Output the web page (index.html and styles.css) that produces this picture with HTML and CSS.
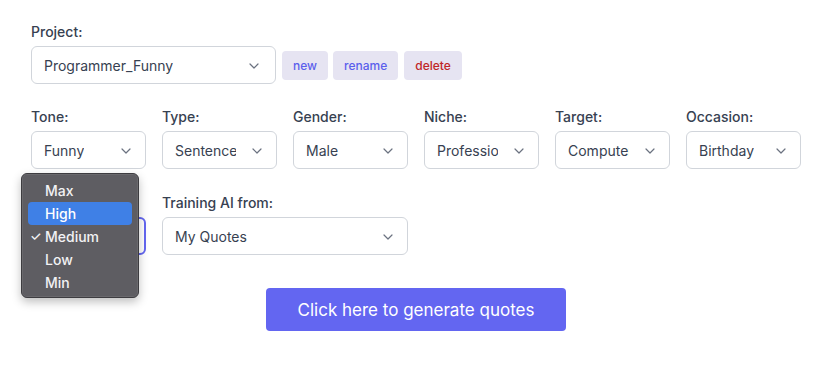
FILE: index.html
```html
<!DOCTYPE html>
<html>
<head>
<meta charset="utf-8">
<link rel="stylesheet" href="styles.css">
</head>
<body>
<div class="page">
  <div class="field">
    <label class="label">Project:</label>
    <div class="project-row">
      <div class="select project-select"><span class="val">Programmer_Funny</span><svg class="chev" viewBox="0 0 10 6"><path d="M1 1l4 4 4-4"/></svg></div>
      <button class="mini">new</button>
      <button class="mini">rename</button>
      <button class="mini danger">delete</button>
    </div>
  </div>

  <div class="grid">
    <div class="field"><label class="label">Tone:</label><div class="select"><span class="val">Funny</span><svg class="chev" viewBox="0 0 10 6"><path d="M1 1l4 4 4-4"/></svg></div></div>
    <div class="field"><label class="label">Type:</label><div class="select"><span class="val">Sentence</span><svg class="chev" viewBox="0 0 10 6"><path d="M1 1l4 4 4-4"/></svg></div></div>
    <div class="field"><label class="label">Gender:</label><div class="select"><span class="val">Male</span><svg class="chev" viewBox="0 0 10 6"><path d="M1 1l4 4 4-4"/></svg></div></div>
    <div class="field"><label class="label">Niche:</label><div class="select"><span class="val">Professional</span><svg class="chev" viewBox="0 0 10 6"><path d="M1 1l4 4 4-4"/></svg></div></div>
    <div class="field"><label class="label">Target:</label><div class="select"><span class="val">Computer</span><svg class="chev" viewBox="0 0 10 6"><path d="M1 1l4 4 4-4"/></svg></div></div>
    <div class="field"><label class="label">Occasion:</label><div class="select"><span class="val">Birthday</span><svg class="chev" viewBox="0 0 10 6"><path d="M1 1l4 4 4-4"/></svg></div></div>

    <div class="field menu-anchor"><label class="label hidden-label">Creativity:</label><div class="select focused"><span class="val">Medium</span><svg class="chev" viewBox="0 0 10 6"><path d="M1 1l4 4 4-4"/></svg></div>
      <ul class="menu">
        <li class="item">Max</li>
        <li class="item active">High</li>
        <li class="item checked"><span class="check">✓</span>Medium</li>
        <li class="item">Low</li>
        <li class="item">Min</li>
      </ul>
    </div>
    <div class="field span2"><label class="label">Training AI from:</label><div class="select"><span class="val">My Quotes</span><svg class="chev" viewBox="0 0 10 6"><path d="M1 1l4 4 4-4"/></svg></div></div>
  </div>

  <div class="actions">
    <button class="generate">Click here to generate quotes</button>
  </div>
</div>
</body>
</html>
```

FILE: styles.css
```css
* { box-sizing: border-box; }
html, body { margin: 0; padding: 0; background: #fff; }
body { font-family: Inter, "Noto Sans", sans-serif; color: #374151; }
.page { width: 826px; padding: 22px 25px 0 31px; }
.field { display: flex; flex-direction: column; }
.label { display: block; font-size: 14px; line-height: 20px; font-weight: 500; color: #374151; margin-bottom: 4px; }
.project-row { display: flex; align-items: center; gap: 5px; }
.select {
  position: relative; height: 38px; border: 1px solid #d1d5db; border-radius: 6px;
  background: #fff; display: flex; align-items: center; padding: 0 40px 0 12px;
  font-size: 14px; color: #374151; overflow: hidden;
}
.val { white-space: nowrap; overflow: hidden; display: block; }
.chev { position: absolute; right: 14px; top: 16px; width: 10px; height: 6px; fill: none; stroke: #6b7280; stroke-width: 1.2; stroke-linecap: round; stroke-linejoin: round; }
.project-select { width: 245px; margin-right: 1px; }
.project-select .chev { right: 16px; }
.mini {
  height: 29px; border: none; border-radius: 4px; background: #e6e4f2; color: #5b5fec;
  font-family: inherit; font-size: 12px; font-weight: 500; padding: 0 11px;
}
.mini.danger { color: #c02626; margin-left: 1px; }
.grid { display: grid; grid-template-columns: repeat(6, 115px); column-gap: 16px; row-gap: 24px; margin-top: 23px; }
.span2 { grid-column: span 2; }
.focused { border: 2px solid #6366f1; }
.menu-anchor { position: relative; }
.menu {
  position: absolute; left: -10px; top: -20px; width: 118px; margin: 0; padding: 5px 6px 3px;
  list-style: none; background: #5e5d62; border: 1px solid #3d3c40; border-radius: 6px;
  box-shadow: 0 0 0 0.5px rgba(255,255,255,0.15) inset, 0 4px 10px rgba(0,0,0,0.25);
}
.item { position: relative; height: 23px; line-height: 23px; padding-left: 17px; font-size: 14px; font-weight: 500; color: #f2f2f4; border-radius: 4px; }
.item.active { background: #3f80e6; color: #fff; }
.check { position: absolute; left: 2px; top: 0; font-size: 13px; }
.actions { display: flex; justify-content: center; width: 770px; margin-top: 33px; }
.generate {
  width: 300px; height: 43px; border: none; border-radius: 4px; background: #6366f1; color: #fff;
  font-family: inherit; font-size: 17px; font-weight: 400;
}
```
